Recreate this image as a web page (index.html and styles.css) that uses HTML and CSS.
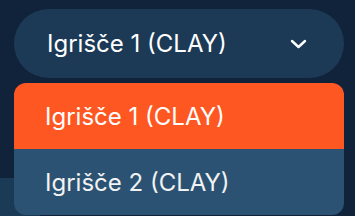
FILE: index.html
```html
<!DOCTYPE html>
<html>
<head>
  <title>Igrišče</title>
  <link rel="stylesheet" href="styles.css">
</head>
<body>
  <div class="card-behind"></div>
  <div class="container">
    <div class="select">
      <span class="select-label">Igrišče 1 (CLAY)</span>
      <svg class="chevron" width="17" height="10" viewBox="0 0 17 10">
        <path d="M2 2 L8.5 8 L15 2" fill="none" stroke="#ffffff" stroke-width="2.4" stroke-linecap="round" stroke-linejoin="round"/>
      </svg>
    </div>
    <ul class="options">
      <li class="option active">Igrišče 1 (CLAY)</li>
      <li class="option">Igrišče 2 (CLAY)</li>
    </ul>
  </div>
</body>
</html>
```

FILE: styles.css
```css
html {
  overflow: hidden;
}

body {
  margin: 0;
  font-family: Inter, "Noto Sans", sans-serif;
  background-color: #10233a;
  height: 216px;
  overflow: hidden;
  position: relative;
}

.card-behind {
  position: absolute;
  left: -20px;
  top: 178px;
  width: 60px;
  height: 38px;
  background-color: #1b3a55;
  border-radius: 12px 12px 0 0;
}

.container {
  position: relative;
  padding: 9px 11px 0 14px;
}

.select {
  display: flex;
  align-items: center;
  justify-content: space-between;
  height: 69px;
  padding: 0 37px 0 33px;
  border-radius: 35px;
  background-color: #1c3a56;
  color: #ffffff;
  font-size: 24px;
}

.chevron {
  display: block;
  margin-top: 1px;
}

.options {
  list-style: none;
  margin: 5px 0 0 0;
  padding: 0;
  border-radius: 12px;
  overflow: hidden;
}

.option {
  display: flex;
  align-items: center;
  height: 66px;
  padding-left: 31px;
  background-color: #2b5272;
  color: #f2f2f2;
  font-size: 24px;
}

.option.active {
  background-color: #ff5722;
  color: #ffffff;
}
```
